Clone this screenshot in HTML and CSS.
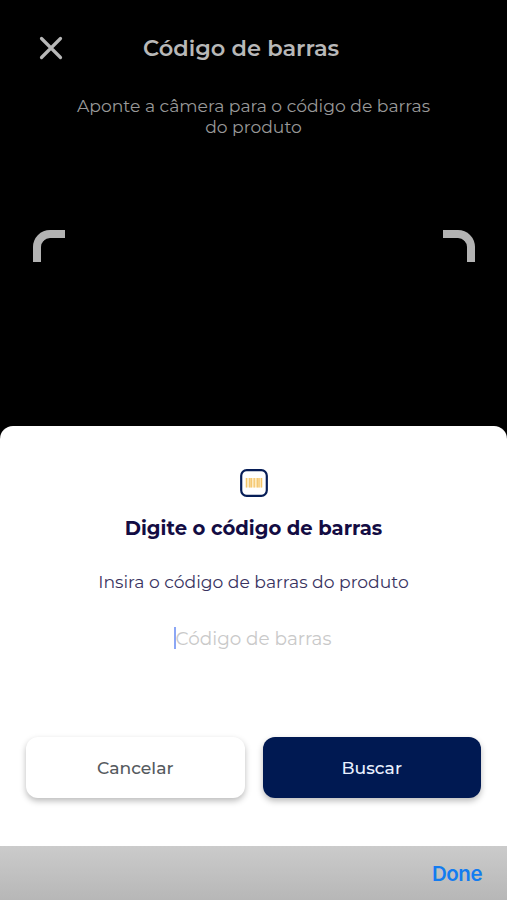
FILE: index.html
```html
<!DOCTYPE html>
<html lang="pt-BR">
<head>
  <meta charset="UTF-8" />
  <meta name="viewport" content="width=device-width, initial-scale=1.0"/>
  <title>Código de barras</title>
  <link rel="stylesheet" href="styles.css">
</head>
<body>

<main class="scanner">
  <header class="scanner-header">
    <button class="close-btn" aria-label="Fechar">
      <svg width="24" height="24" viewBox="0 0 24 24">
        <path d="M2.5 2.5 21.5 21.5M21.5 2.5 2.5 21.5" />
      </svg>
    </button>
    <h1 class="scanner-title">Código de barras</h1>
  </header>

  <p class="scanner-hint">Aponte a câmera para o código de barras<br>do produto</p>

  <div class="scan-frame">
    <span class="corner corner-left"></span>
    <span class="corner corner-right"></span>
  </div>
</main>

<section class="sheet">
  <svg class="barcode-icon" width="28" height="28" viewBox="0 0 28 28">
    <rect class="icon-frame" x="1.2" y="1.2" width="25.6" height="25.6" rx="5.5" />
    <path class="icon-bars-light" d="M5.5 9h17v9.5h-17z" />
    <path class="icon-bars" d="M6.5 9v9.5M9.7 9v9.5M11.3 9v9.5M14.2 9v9.5M17.3 9v9.5M19 9v9.5M21.5 9v9.5" />
  </svg>
  <h2 class="sheet-title">Digite o código de barras</h2>
  <p class="sheet-text">Insira o código de barras do produto</p>

  <div class="code-input">
    <span class="caret"></span>
    <span class="placeholder">Código de barras</span>
  </div>

  <div class="actions">
    <button class="btn btn-cancel">Cancelar</button>
    <button class="btn btn-search">Buscar</button>
  </div>
</section>

<footer class="keyboard-bar">
  <button class="done-btn">Done</button>
</footer>

</body>
</html>
```
FILE: styles.css
```css
* {
  box-sizing: border-box;
}

body {
  font-family: Montserrat, Inter, sans-serif;
  margin: 0;
  height: 900px;
  background-color: #000;
  display: flex;
  flex-direction: column;
  overflow: hidden;
}

h1, h2, p {
  margin: 0;
  white-space: nowrap;
}

button {
  font-family: inherit;
  border: none;
  background: none;
  padding: 0;
  cursor: pointer;
}

.scanner {
  height: 426px;
  flex-shrink: 0;
  color: #b8b8b8;
}

.scanner-header {
  display: flex;
  align-items: center;
  height: 28px;
  margin-top: 34px;
  padding-left: 39px;
}

.close-btn {
  width: 24px;
  height: 24px;
}

.close-btn svg {
  display: block;
  fill: none;
  stroke: #b8b8b8;
  stroke-width: 3.2;
  stroke-linecap: round;
}

.scanner-title {
  margin-left: 80px;
  font-size: 22.5px;
  line-height: 28px;
  font-weight: 600;
}

.scanner-hint {
  margin-top: 33px;
  text-align: center;
  font-size: 17.2px;
  line-height: 21px;
  color: #999;
}

.scan-frame {
  display: flex;
  justify-content: space-between;
  margin-top: 93px;
  padding: 0 32px 0 33px;
}

.corner {
  width: 32px;
  height: 32px;
  border: 0 solid #b3b3b3;
  border-top-width: 8px;
}

.corner-left {
  border-left-width: 8px;
  border-top-left-radius: 17px;
}

.corner-right {
  border-right-width: 8px;
  border-top-right-radius: 17px;
}

.sheet {
  height: 420px;
  flex-shrink: 0;
  display: flex;
  flex-direction: column;
  align-items: center;
  padding: 43px 26px 0;
  background-color: #fff;
  border-radius: 13px 13px 0 0;
}

.icon-frame {
  fill: #fff;
  stroke: #061d57;
  stroke-width: 2.2;
}

.icon-bars-light {
  fill: #fdebc4;
}

.icon-bars {
  stroke: #f4c56a;
  stroke-width: 1.2;
}

.sheet-title {
  margin-top: 18px;
  font-size: 19.6px;
  line-height: 26px;
  font-weight: 700;
  color: #130c43;
}

.sheet-text {
  margin-top: 30px;
  font-size: 17.2px;
  line-height: 22px;
  color: #39335f;
}

.code-input {
  display: flex;
  align-items: center;
  height: 24px;
  margin-top: 33px;
  padding-right: 2px;
}

.caret {
  width: 2px;
  height: 22px;
  background-color: #8ba6f5;
}

.placeholder {
  padding-top: 1px;
  font-size: 18.4px;
  line-height: 24px;
  color: #c9c9c9;
}

.actions {
  display: flex;
  gap: 18px;
  width: 100%;
  margin-top: 87px;
}

.btn {
  flex: 1;
  height: 61px;
  padding-bottom: 1px;
  border-radius: 12px;
  font-size: 17.2px;
  font-weight: 500;
  box-shadow: 0 3px 6px rgba(0, 0, 0, 0.27);
}

.btn-cancel {
  background-color: #fff;
  color: #555a5e;
}

.btn-search {
  background-color: #001952;
  color: #e9f1ff;
}

.keyboard-bar {
  flex: 1;
  display: flex;
  justify-content: flex-end;
  align-items: center;
  padding-right: 25px;
  background: linear-gradient(#cbcbcb, #b7b7b7);
}

.done-btn {
  font-family: Inter, sans-serif;
  font-size: 20.5px;
  font-weight: 600;
  letter-spacing: -0.5px;
  color: #137cf0;
}
```
